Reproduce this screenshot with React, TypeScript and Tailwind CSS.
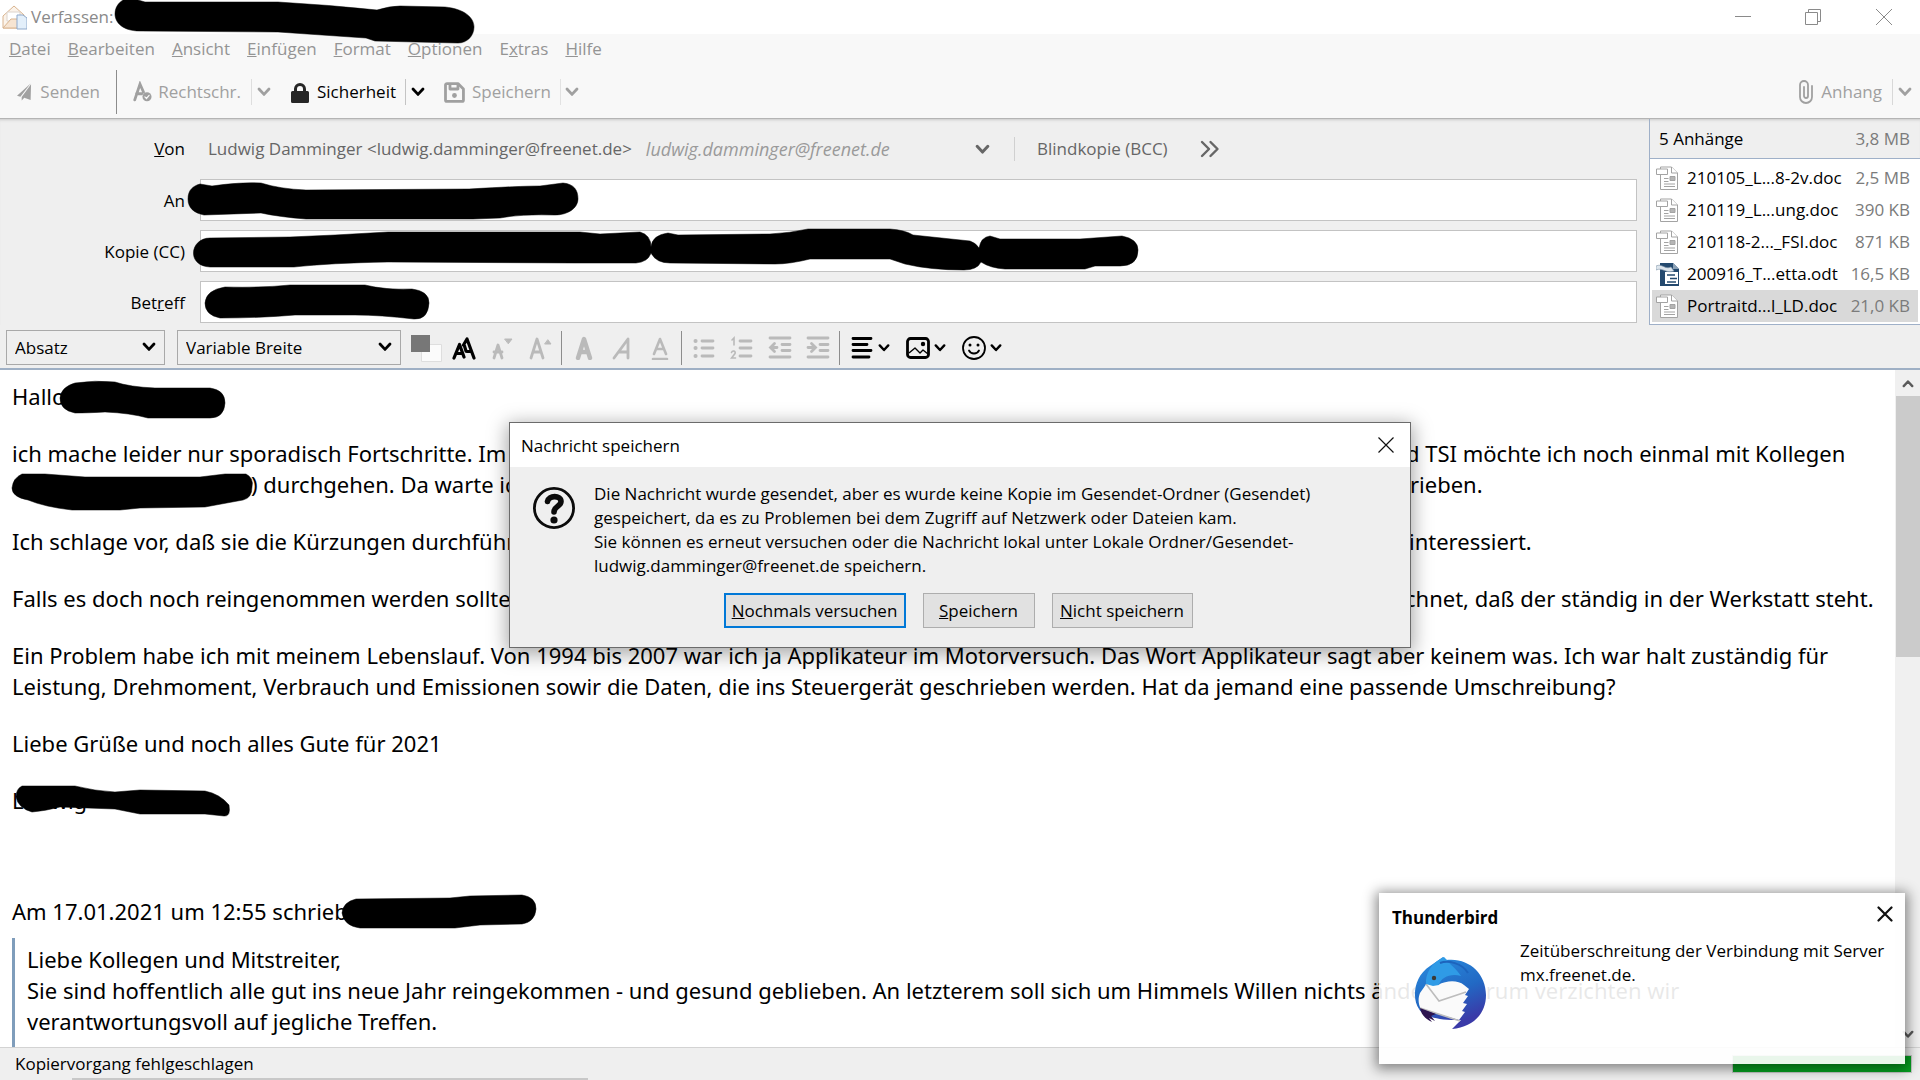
import React from 'react';
import clsx from 'clsx';

const menus = [
  ['', 'D', 'atei'],
  ['', 'B', 'earbeiten'],
  ['', 'A', 'nsicht'],
  ['', 'E', 'infügen'],
  ['', 'F', 'ormat'],
  ['', 'O', 'ptionen'],
  ['E', 'x', 'tras'],
  ['', 'H', 'ilfe'],
];

const attachments = [
  { name: '210105_L...8-2v.doc', size: '2,5 MB', type: 'doc' },
  { name: '210119_L...ung.doc', size: '390 KB', type: 'doc' },
  { name: '210118-2..._FSI.doc', size: '871 KB', type: 'doc' },
  { name: '200916_T...etta.odt', size: '16,5 KB', type: 'odt' },
  { name: 'Portraitd...l_LD.doc', size: '21,0 KB', type: 'doc', selected: true },
];

type IconProps = { className?: string };

const Chevron = ({ className }: IconProps) => (
  <svg viewBox="0 0 14 10" fill="none" stroke="currentColor" strokeWidth="2.8" strokeLinecap="round" strokeLinejoin="round" className={clsx('shrink-0', className ?? 'h-[10px] w-[14px]')}>
    <path d="M2 2l5 5.4L12 2" />
  </svg>
);

// Hand drawn marker stroke that hides names and addresses
const Marker = ({ className, viewBox, d }: { className: string; viewBox: string; d: string }) => (
  <svg viewBox={viewBox} className={clsx('pointer-events-none absolute z-10 overflow-visible', className)} aria-hidden="true">
    <path d={d} fill="#000" stroke="#000" strokeOpacity="0.5" strokeLinejoin="round" />
  </svg>
);

const ComposeIcon = () => (
  <svg viewBox="0 0 25 26" className="h-[26px] w-[25px]" fill="none" strokeLinejoin="round">
    <path d="M1 12L12 2l10 9v13H1z" fill="#fbf3ea" stroke="#d9b48f" />
    <path d="M5 8h13v9H5z" fill="#fff" stroke="#dcd3cc" />
    <path d="M1 24l8-9h6l5 9z" fill="#f6e4d2" stroke="#d9b48f" />
    <path d="M15 11h6l4 3v11H15z" fill="#e3effa" stroke="#8fa9cb" />
  </svg>
);

const SendIcon = () => (
  <svg viewBox="0 0 18 20" className="h-5 w-[18px]" fill="currentColor">
    <path d="M16 0L0 14.500l4 1.200zM16.500 1L5.500 16v4l3-3.200 7.500 2.700z" />
  </svg>
);

const SpellIcon = () => (
  <svg viewBox="0 0 22 22" className="h-[22px] w-[22px]" fill="none" stroke="currentColor" strokeLinecap="round">
    <path d="M2 20L8 2l4 9M4 13h6" strokeWidth="3.200" />
    <circle cx="16" cy="16.500" r="5.200" fill="currentColor" stroke="none" />
    <path d="M13.600 16.600l1.800 1.800 3-3.600" stroke="#f8f8f8" strokeWidth="1.400" />
  </svg>
);

const LockIcon = () => (
  <svg viewBox="0 0 18 21" className="h-[21px] w-[18px]" fill="#262626">
    <path d="M3 9V7a6 6 0 0112 0v2h1.500A1.500 1.500 0 0118 10.500v9a1.500 1.500 0 01-1.500 1.500h-15A1.500 1.500 0 010 19.500v-9A1.500 1.500 0 011.500 9zm3 0h6V7a3 3 0 00-6 0z" />
  </svg>
);

const SaveIcon = () => (
  <svg viewBox="0 0 21 21" className="h-[21px] w-[21px]" fill="none" stroke="currentColor" strokeWidth="2.800" strokeLinejoin="round">
    <path d="M1.500 3A1.500 1.500 0 013 1.500h11L19.500 7v11a1.500 1.500 0 01-1.500 1.500H3A1.500 1.500 0 011.500 18z" />
    <path d="M6 2v5h8V2" />
    <circle cx="10.500" cy="13.500" r="2.400" fill="currentColor" stroke="none" />
  </svg>
);

const ClipIcon = () => (
  <svg viewBox="0 0 14 24" className="h-6 w-[14px]" fill="none" stroke="currentColor" strokeWidth="1.800" strokeLinecap="round">
    <path d="M13 6v11a6 6 0 01-12 0V5a4 4 0 018 0v11a2 2 0 01-4 0V7" />
  </svg>
);

const FileIcon = ({ type }: { type: string }) =>
  type === 'odt' ? (
    <svg viewBox="0 0 24 24" className="h-6 w-6 shrink-0">
      <path d="M4 1h13l6 6v17H4z" fill="#24496e" />
      <path d="M9 10h13v12H9z" fill="#fff" />
      <path d="M11 13h8M14 16.500h7M11 20h9" stroke="#24496e" strokeWidth="1.600" />
      <path d="M0 4c6-3 9 4 15 1l3 4C10 12 7 5 0 8z" fill="#dde5ec" stroke="#7f94a8" strokeWidth=".6" />
      <path d="M17 1l6 6h-6z" fill="#8aa0b5" />
    </svg>
  ) : (
    <svg viewBox="0 0 24 24" className="h-6 w-6 shrink-0" fill="#fff" stroke="#a3a3a3">
      <path d="M4.500 1h11l6 6v16.500h-17z" />
      <path d="M15.500 1v6h6" />
      <path d="M.5 3h11v5.500H.5z" />
      <path d="M14 10.500h5v4h-5z" fill="#b5b5b5" />
      <path d="M8 12.500h4.500M8 15.500h4.500M8 18h11M8 20.500h11" />
    </svg>
  );

const QuestionIcon = () => (
  <svg viewBox="0 0 42 42" className="h-[42px] w-[42px] shrink-0" fill="none" stroke="#0b0b0b">
    <circle cx="21" cy="21" r="19.600" strokeWidth="2.800" />
    <path d="M14.500 14.500c1-6.500 13.500-6.500 13.500 0 0 5-7 4.500-7 10.500" strokeWidth="5.600" strokeLinecap="round" />
    <circle cx="21" cy="33" r="3.600" fill="#0b0b0b" stroke="none" />
  </svg>
);

const ThunderbirdLogo = () => (
  <svg viewBox="0 0 72 72" className="h-[72px] w-[72px]">
    <defs>
      <linearGradient id="wing" x1="0" y1="0" x2="0.4" y2="1">
        <stop offset="0" stopColor="#2a8fe0" />
        <stop offset="0.600" stopColor="#2269c4" />
        <stop offset="1" stopColor="#3a3aa8" />
      </linearGradient>
    </defs>
    <path d="M29 0l3 3C54 0 72 16 72 38c0 19-13 32-34 34l9-9C22 64 8 58 5 52-2 42-1 20 16 9z" fill="url(#wing)" />
    <path d="M6 36l7-10 11 2c9-5 20-5 26 0l5 4-4 6 3 1-5 7 4 1-5 7 3 1-6 8L7 52C4 47 4 41 6 36z" fill="#fafafa" />
    <path d="M12 27l13 17 27-9M6 51l40 13" fill="none" stroke="#bdbdbd" strokeWidth="1.600" />
    <path d="M30 0C17 6 11 17 12 27l7 2 6-1c2-8 12-12 22-9 -5-8-12-12-14-16z" fill="#2f9be6" />
    <path d="M26 6c8-3 22 0 28 10" fill="none" stroke="#1d64bd" strokeWidth="2" />
    <circle cx="20" cy="21" r="2.200" fill="#3b3a36" />
    <path d="M6 51l16 6-5 2 4 5-6-3 3 4C11 62 7 57 6 51z" fill="#2d1450" />
  </svg>
);

const glyph = 'h-6 w-6 shrink-0';

const LetterA = ({ x = 12, top = 3, w = 2.8, children }: { x?: number; top?: number; w?: number; children?: React.ReactNode }) => (
  <svg viewBox="0 0 24 24" className={glyph} fill="none" stroke="currentColor" strokeLinecap="round" strokeLinejoin="round">
    <path d={`M${x - 7 + top / 3} 22L${x} ${top}l${7 - top / 3} ${22 - top}M${x - 4} 16h8`} strokeWidth={w} />
    {children}
  </svg>
);

const ListLines = ({ children, short }: { children: React.ReactNode; short?: boolean }) => (
  <svg viewBox="0 0 24 24" className={glyph} fill="none" stroke="currentColor" strokeWidth="2.800" strokeLinecap="round">
    <path d={short ? 'M2 2h20M14 8.500h8M14 14.500h8M2 21h20' : 'M10 5h11M10 12h11M10 20h11'} />
    {children}
  </svg>
);

const ToolButton = ({ label, className, children }: { label: string; className?: string; children: React.ReactNode }) => (
  <button type="button" aria-label={label} className={clsx('flex items-center', className ?? 'text-[#bababa]')}>
    {children}
  </button>
);

const Rule = ({ className }: IconProps) => <span className={clsx('w-px shrink-0', className)} />;

const TitleBar = () => (
  <header className="relative flex h-[34px] items-center justify-between bg-white text-[#8a8a8a]">
    <div className="flex items-center gap-1 pl-[2px]">
      <ComposeIcon />
      <span>Verfassen:</span>
    </div>
    <Marker
      className="-top-[2px] left-[115px] h-[46px] w-[360px]"
      viewBox="115 -2 360 46"
      d="M131 -2L145 2 278 2Q330 5 377 10Q390 6 400 6L445 7C465 9 474 18 474 27C474 36 467 43 458 43L375 41 366 38 278 32 140 31C122 31 115 22 115 14C115 5 122 -2 131 -2Z"
    />
    <div className="flex h-full">
      <button type="button" aria-label="Minimieren" className="flex w-[70px] items-center justify-center">
        <svg viewBox="0 0 16 16" className="h-4 w-4" stroke="currentColor"><path d="M0 7.500h16" /></svg>
      </button>
      <button type="button" aria-label="Wiederherstellen" className="flex w-[70px] items-center justify-center">
        <svg viewBox="0 0 16 16" className="h-4 w-4" fill="none" stroke="currentColor"><path d="M.5 3.500h12v12H.5zM3.500 3.500v-3h12v12h-3" /></svg>
      </button>
      <button type="button" aria-label="Schließen" className="flex w-[72px] items-center justify-center">
        <svg viewBox="0 0 16 16" className="h-4 w-4" stroke="currentColor"><path d="M0 0l16 16M16 0L0 16" /></svg>
      </button>
    </div>
  </header>
);

const Toolbar = () => (
  <div className="flex h-[53px] items-center justify-between border-b border-[#b4b4b4] text-[#a0a0a0]">
    <div className="flex h-full items-center">
      <button type="button" className="flex w-[100px] items-center gap-2 pl-[17px]">
        <SendIcon />
        Senden
      </button>
      <Rule className="ml-4 h-11 bg-[#8c8c8c]" />
      <button type="button" className="ml-4 flex w-[108px] items-center gap-[6px]">
        <SpellIcon />
        Rechtschr.
      </button>
      <Rule className="ml-[10px] h-[26px] bg-[#dedede]" />
      <button type="button" aria-label="Rechtschreibung wählen" className="ml-[5px]"><Chevron /></button>
      <button type="button" className="ml-5 flex w-[105px] items-center gap-2 text-black">
        <LockIcon />
        Sicherheit
      </button>
      <Rule className="ml-[9px] h-[26px] bg-[#c4c4c4]" />
      <button type="button" aria-label="Sicherheit wählen" className="ml-[5px] text-black"><Chevron /></button>
      <button type="button" className="ml-[19px] flex w-[107px] items-center gap-[7px]">
        <SaveIcon />
        Speichern
      </button>
      <Rule className="ml-[9px] h-[26px] bg-[#e2e2e2]" />
      <button type="button" aria-label="Speichern als" className="ml-1"><Chevron /></button>
    </div>
    <div className="flex items-center pr-2">
      <button type="button" className="flex items-center gap-2">
        <ClipIcon />
        Anhang
      </button>
      <Rule className="ml-[10px] h-[26px] bg-[#d8d8d8]" />
      <button type="button" aria-label="Anhang wählen" className="ml-[5px]"><Chevron /></button>
    </div>
  </div>
);

const Field = ({ id, label, children }: { id: string; label: React.ReactNode; children?: React.ReactNode }) => (
  <div className="flex h-[42px] items-center">
    <label htmlFor={id} className="w-[200px] shrink-0 pt-[2px] pr-[15px] text-right">{label}</label>
    <div className="relative h-full flex-1">
      <input id={id} type="text" className="h-full w-full border border-[#c3c3c3] bg-white px-2 outline-none" />
      {children}
    </div>
  </div>
);

const Addressing = () => (
  <section className="flex h-[206px] bg-[#efefef] shadow-[inset_0_3px_3px_-2px_#c9c9c9]">
    <div className="flex flex-1 flex-col gap-[9px] pr-3">
      <div className="-mb-[9px] flex h-[60px] items-center">
        <span className="w-[185px] text-right"><u>V</u>on</span>
        <button type="button" aria-haspopup="listbox" className="ml-[23px] flex w-[782px] items-center text-[#666]">
          <span>Ludwig Damminger &lt;ludwig.damminger@freenet.de&gt;</span>
          <span className="ml-[14px] flex-1 text-left text-[18px] text-[#9a9a9a] italic">ludwig.damminger@freenet.de</span>
          <Chevron className="h-[11px] w-[15px]" />
        </button>
        <Rule className="ml-6 h-6 bg-[#d0d0d0]" />
        <button type="button" className="ml-[22px] text-[#666]">Blindkopie (BCC)</button>
        <button type="button" aria-label="Weitere Felder" className="ml-8 text-[#666]">
          <svg viewBox="0 0 20 18" className="h-[18px] w-5" fill="none" stroke="currentColor" strokeWidth="2.400" strokeLinecap="round" strokeLinejoin="round">
            <path d="M2 2l7 7-7 7M10.500 2l7 7-7 7" />
          </svg>
        </button>
      </div>
      <Field id="to" label="An">
        <Marker
          className="top-1 -left-3 h-[37px] w-[390px]"
          viewBox="188 183 390 37"
          d="M200 184L212 186Q240 182 261 183Q280 189 306 190L469 189Q520 186 540 186L563 183C574 184 578 190 578 199C578 208 568 215 555 215Q520 214 500 218L473 219 306 219Q280 217 261 213L204 215C194 213 188 208 188 199C188 190 193 186 200 184Z"
        />
      </Field>
      <Field id="cc" label="Kopie (CC)">
        <Marker
          className="-top-px -left-[6px] h-[42px] w-[944px]"
          viewBox="194 229 944 42"
          d="M210 238L290 237 335 235 388 232 580 232 600 234 640 232Q651 235 651 247Q652 235 668 233L678 235 770 234Q790 233 808 229L890 229Q905 230 913 235L970 241Q976 243 979 248Q981 237 990 236L1000 239 1080 239 1122 236Q1138 239 1138 250Q1138 266 1120 266L1095 266 1085 269 1005 269Q990 268 981 262Q977 270 964 270Q930 270 905 264L890 259 810 259Q790 264 775 264L670 263Q656 263 651 253Q648 262 636 263L575 263 388 262Q330 263 294 267L210 267C186 266 190 238 210 238Z"
        />
      </Field>
      <Field id="subject" label={<>Bet<u>r</u>eff</>}>
        <Marker
          className="top-1 left-[5px] h-[34px] w-[224px]"
          viewBox="205 285 224 34"
          d="M225 287Q260 288 290 285L365 285Q385 290 412 289Q429 291 429 303Q428 320 414 319Q380 315 355 315L295 315Q260 318 220 318Q205 315 205 303Q206 290 225 287Z"
        />
      </Field>
    </div>
    <aside className="flex w-[271px] flex-col border-b border-l border-[#9fb0c8]">
      <div className="flex h-10 items-center justify-between border-b border-[#9fb0c8] pr-[10px] pl-[9px]">
        <span>5 Anhän<u>g</u>e</span>
        <span className="text-[#7b7b7b]">3,8 MB</span>
      </div>
      <ul className="flex-1 bg-white px-[2px] pt-[3px]">
        {attachments.map((file) => (
          <li key={file.name} className={clsx('flex h-8 items-center pr-2 pl-1', file.selected && 'bg-[#d9d9d9]')}>
            <FileIcon type={file.type} />
            <span className="ml-[7px] flex-1">{file.name}</span>
            <span className="text-[#7b7b7b]">{file.size}</span>
          </li>
        ))}
      </ul>
    </aside>
  </section>
);

const FormatSelect = ({ label, value, className }: { label: string; value: string; className: string }) => (
  <div className={clsx('relative h-[35px]', className)}>
    <select aria-label={label} className="h-full w-full appearance-none border border-[#a9a9a9] bg-[#efefef] pl-2">
      <option>{value}</option>
    </select>
    <Chevron className="pointer-events-none absolute top-3 right-[9px] h-[10px] w-[14px]" />
  </div>
);

const FormatBar = () => (
  <div className="flex h-[45px] items-center border-b-2 border-[#9fb0c5] bg-[#efefef] pt-[2px] pl-[6px]">
    <FormatSelect label="Absatzformat" value="Absatz" className="w-[159px]" />
    <FormatSelect label="Schriftart" value="Variable Breite" className="ml-3 w-[224px]" />
    <button type="button" aria-label="Textfarbe" className="ml-[9px]">
      <svg viewBox="0 0 32 28" className="h-7 w-8">
        <path d="M11.500 10.500h20v17h-20z" fill="#fbfbfb" stroke="#dedede" />
        <path d="M1 1h19v17H1z" fill="#777" />
      </svg>
    </button>
    <div className="ml-[10px] flex gap-[14px]">
      <ToolButton label="Schriftgröße" className="text-black">
        <svg viewBox="0 0 24 24" className={glyph} fill="none" stroke="currentColor" strokeWidth="3.200" strokeLinecap="round" strokeLinejoin="round">
          <path d="M2 22L7.500 8.500 12 21M4 17.500h6M11.500 9L15 3l7 19M15 15.500h4M12.500 10l1.500 5" />
        </svg>
      </ToolButton>
      <ToolButton label="Kleiner">
        <LetterA x={8} top={9}><path d="M15 3h7l-3.500 4.500z" fill="currentColor" /></LetterA>
      </ToolButton>
      <ToolButton label="Größer">
        <LetterA x={9}><path d="M17 8h6l-3-4z" fill="currentColor" /></LetterA>
      </ToolButton>
    </div>
    <Rule className="ml-[9px] h-[34px] bg-[#8d8d8d]" />
    <div className="ml-[10px] flex gap-[14px]">
      <ToolButton label="Fett"><LetterA w={4.4} /></ToolButton>
      <ToolButton label="Kursiv">
        <svg viewBox="0 0 24 24" className={glyph} fill="none" stroke="currentColor" strokeWidth="2.800" strokeLinecap="round" strokeLinejoin="round">
          <path d="M4 22L18 3v19M9.500 16H18" />
        </svg>
      </ToolButton>
      <ToolButton label="Unterstrichen">
        <svg viewBox="0 0 24 24" className={glyph} fill="none" stroke="currentColor" strokeWidth="2.600" strokeLinecap="round" strokeLinejoin="round">
          <path d="M6 18l6-15 6 15M8.500 13h7M5 23h14" />
        </svg>
      </ToolButton>
    </div>
    <Rule className="ml-[9px] h-[34px] bg-[#8d8d8d]" />
    <div className="ml-[10px] flex gap-[14px]">
      <ToolButton label="Aufzählung">
        <ListLines><path d="M3.500 5h.1M3.500 12h.1M3.500 20h.1" strokeWidth="4" /></ListLines>
      </ToolButton>
      <ToolButton label="Nummerierung">
        <ListLines><path d="M2 4l2-2v7M1.500 16.500c1-2.500 4.500-1.500 3.500 1L1.500 22h4" strokeWidth="1.600" /></ListLines>
      </ToolButton>
      <ToolButton label="Ausrücken">
        <ListLines short><path d="M9 11.500H3M6.500 7.500l-4 4 4 4" /></ListLines>
      </ToolButton>
      <ToolButton label="Einrücken">
        <ListLines short><path d="M2 11.500h7M5.500 7.500l4 4-4 4" /></ListLines>
      </ToolButton>
    </div>
    <Rule className="ml-[9px] h-[34px] bg-[#8d8d8d]" />
    <div className="ml-[10px] flex gap-4">
      <ToolButton label="Ausrichtung" className="gap-1 text-black">
        <svg viewBox="0 0 24 24" className={glyph} fill="none" stroke="currentColor" strokeWidth="2.800" strokeLinecap="round">
          <path d="M3 2.500h18M3 8.500h14M3 14.500h18M3 21h16" />
        </svg>
        <Chevron className="h-[10px] w-3" />
      </ToolButton>
      <ToolButton label="Einfügen" className="gap-1 text-black">
        <svg viewBox="0 0 24 24" className={glyph} fill="none" stroke="currentColor" strokeWidth="2.800" strokeLinejoin="round">
          <rect x="1.500" y="2.500" width="21" height="19" rx="3" />
          <path d="M3 17l6-5 5 5 3-3 5 4" strokeWidth="1.400" />
          <circle cx="17" cy="8" r="2.200" fill="currentColor" stroke="none" />
        </svg>
        <Chevron className="h-[10px] w-3" />
      </ToolButton>
      <ToolButton label="Smiley" className="gap-1 text-black">
        <svg viewBox="0 0 24 24" className={glyph} fill="none" stroke="currentColor" strokeWidth="1.800" strokeLinecap="round">
          <circle cx="12" cy="12" r="11" />
          <path d="M7 14.500c2 4 8 4 10 0" />
          <circle cx="8" cy="9" r="1.500" fill="currentColor" stroke="none" />
          <circle cx="16" cy="9" r="1.500" fill="currentColor" stroke="none" />
        </svg>
        <Chevron className="h-[10px] w-3" />
      </ToolButton>
    </div>
  </div>
);

// The start of a line and its end, with the dialog lying over what is between
const SplitLine = ({ start, end, className }: { start: string; end: string; className: string }) => (
  <span className="flex">
    <span className={clsx('shrink-0', className)}>{start}</span>
    <span>{end}</span>
  </span>
);

const MessageBody = () => (
  <main className="relative flex min-h-0 flex-1 bg-white font-['Noto_Sans','Open_Sans',sans-serif] text-[22px] leading-[31px]">
    <div className="flex-1 overflow-hidden pt-[11px] pl-3 whitespace-nowrap">
      <div className="flex flex-col gap-[26px]">
        <p>Hallo</p>
        <div>
          <SplitLine start="ich mache leider nur sporadisch Fortschritte. Im" end="d TSI möchte ich noch einmal mit Kollegen" className="w-[1394px]" />
          <SplitLine start=") durchgehen. Da warte ich" end="rieben." className="w-[1398px] pl-[239px]" />
        </div>
        <SplitLine start="Ich schlage vor, daß sie die Kürzungen durchführ" end="interessiert." className="w-[1397px]" />
        <SplitLine start="Falls es doch noch reingenommen werden sollte" end="chnet, daß der ständig in der Werkstatt steht." className="w-[1393px]" />
        <p>
          Ein Problem habe ich mit meinem Lebenslauf. Von 1994 bis 2007 war ich ja Applikateur im Motorversuch. Das Wort Applikateur sagt aber keinem was. Ich war halt zuständig für
          <br />
          Leistung, Drehmoment, Verbrauch und Emissionen sowir die Daten, die ins Steuergerät geschrieben werden. Hat da jemand eine passende Umschreibung?
        </p>
        <p>Liebe Grüße und noch alles Gute für 2021</p>
        <p>Ludwig</p>
      </div>
      <p className="mt-20">Am 17.01.2021 um 12:55 schrieb</p>
      <blockquote className="mt-[11px] border-l-[3px] border-[#7f9dbb] pt-[6px] pb-6 pl-3">
        Liebe Kollegen und Mitstreiter,
        <br />
        Sie sind hoffentlich alle gut ins neue Jahr reingekommen - und gesund geblieben. An letzterem soll sich um Himmels Willen nichts ändern. Darum verzichten wir
        <br />
        verantwortungsvoll auf jegliche Treffen.
      </blockquote>
    </div>
    <Marker
      className="top-3 left-[60px] h-9 w-[166px]"
      viewBox="60 382 166 36"
      d="M75 383Q95 380 115 382Q130 387 155 388L210 388Q225 390 225 403Q224 418 210 418L148 418Q130 413 105 412Q88 413 75 413Q60 410 60 398Q61 387 75 383Z"
    />
    <Marker
      className="top-[104px] left-3 h-9 w-[241px]"
      viewBox="12 474 241 36"
      d="M22 474L45 474 85 477 200 477 225 474 246 474Q254 478 252 487Q252 498 243 500L205 507 140 508 120 510 72 510Q45 507 28 500Q12 497 12 488Q13 478 22 474Z"
    />
    <Marker
      className="top-[416px] left-4 h-8 w-[214px]"
      viewBox="16 786 214 32"
      d="M22 786L75 786Q95 791 115 792L140 790 205 791Q220 794 229 805Q231 817 224 816L205 814 140 814 115 809 60 807Q45 811 32 812Q18 808 16 797Q16 789 22 786Z"
    />
    <Marker
      className="top-[525px] left-[342px] h-[33px] w-[194px]"
      viewBox="342 895 194 33"
      d="M356 899L450 898 470 896 522 895Q536 897 536 909Q535 922 522 924L480 925 455 928 360 928Q344 926 342 913Q343 902 356 899Z"
    />
    <div className="flex w-[25px] flex-col items-center bg-[#f0f0f0]">
      <span className="flex h-[26px] items-center text-[#5a5a5a]"><Chevron className="h-[9px] w-3 rotate-180" /></span>
      <span className="h-[261px] w-6 bg-[#cbcbcb]" />
      <span className="mt-auto flex h-[26px] items-center text-[#5a5a5a]"><Chevron className="h-[9px] w-3" /></span>
    </div>
  </main>
);

const StatusBar = () => (
  <footer className="flex h-[33px] flex-col border-t border-[#d3d3d3] bg-[#efefef]">
    <div className="flex flex-1 items-center justify-between pt-[2px] pr-2 pl-[15px]">
      <span>Kopiervorgang fehlgeschlagen</span>
      <span role="progressbar" aria-label="Kopiervorgang" className="h-[18px] w-[180px] border border-[#c6c6c6] bg-[#06a021]" />
    </div>
    <div className="ml-[72px] h-[2px] w-[516px] bg-[#c8c8c8]" />
  </footer>
);

const dialogButton = 'h-[35px] bg-[#e1e1e1]';

const SaveDialog = () => (
  <div role="dialog" aria-labelledby="dialog-title" className="absolute top-[422px] left-1/2 z-20 w-[902px] -translate-x-1/2 border border-[#6b6b6b] bg-[#efefef] shadow-[0_4px_18px_2px_rgba(0,0,0,0.35)]">
    <div className="flex h-11 items-center justify-between bg-white pr-4 pl-[11px]">
      <h2 id="dialog-title" className="pt-[2px]">Nachricht speichern</h2>
      <button type="button" aria-label="Schließen">
        <svg viewBox="0 0 16 16" className="h-4 w-4" stroke="#111" strokeWidth="1.200"><path d="M.5.500l15 15M15.500.500l-15 15" /></svg>
      </button>
    </div>
    <div className="flex gap-[19px] pt-[15px] pl-[23px]">
      <div className="pt-[5px]"><QuestionIcon /></div>
      <p className="leading-6">
        Die Nachricht wurde gesendet, aber es wurde keine Kopie im Gesendet-Ordner (Gesendet)
        <br />
        gespeichert, da es zu Problemen bei dem Zugriff auf Netzwerk oder Dateien kam.
        <br />
        Sie können es erneut versuchen oder die Nachricht lokal unter Lokale Ordner/Gesendet-
        <br />
        ludwig.damminger@freenet.de speichern.
      </p>
    </div>
    <div className="flex justify-center gap-[17px] pt-[15px] pr-1 pb-[19px]">
      <button type="button" className={clsx(dialogButton, 'w-[182px] border-2 border-[#0078d7]')}><u>N</u>ochmals versuchen</button>
      <button type="button" className={clsx(dialogButton, 'w-[112px] border border-[#adadad]')}><u>S</u>peichern</button>
      <button type="button" className={clsx(dialogButton, 'w-[141px] border border-[#adadad]')}><u>N</u>icht speichern</button>
    </div>
  </div>
);

const Toast = () => (
  <div role="alert" className="absolute right-[15px] bottom-4 z-30 h-[171px] w-[526px] bg-white/91 pr-3 pl-[13px] shadow-[0_2px_12px_3px_rgba(0,0,0,0.45)]">
    <div className="flex h-[46px] items-center justify-between">
      <strong className="pt-1 font-bold">Thunderbird</strong>
      <button type="button" aria-label="Schließen" className="pb-1">
        <svg viewBox="0 0 16 16" className="h-4 w-4" stroke="#111" strokeWidth="2.200" strokeLinecap="round"><path d="M1.500 1.500l13 13M14.500 1.500l-13 13" /></svg>
      </button>
    </div>
    <div className="flex gap-[34px] pl-[22px]">
      <div className="pt-[18px]"><ThunderbirdLogo /></div>
      <p className="leading-6 whitespace-nowrap">
        Zeitüberschreitung der Verbindung mit Server
        <br />
        mx.freenet.de.
      </p>
    </div>
  </div>
);

const App: React.FC = () => (
  <div className="relative flex h-screen flex-col overflow-hidden bg-[#f8f8f8] font-['Open_Sans','Noto_Sans',sans-serif] text-[17px] leading-6 text-black">
    <TitleBar />
    <nav className="flex h-8 items-center gap-[17px] pb-[2px] pl-[9px] text-[#949494]">
      {menus.map(([before, key, after]) => (
        <button key={key} type="button">
          {before}
          <u>{key}</u>
          {after}
        </button>
      ))}
    </nav>
    <Toolbar />
    <Addressing />
    <FormatBar />
    <MessageBody />
    <StatusBar />
    <SaveDialog />
    <Toast />
  </div>
);

export default App;
